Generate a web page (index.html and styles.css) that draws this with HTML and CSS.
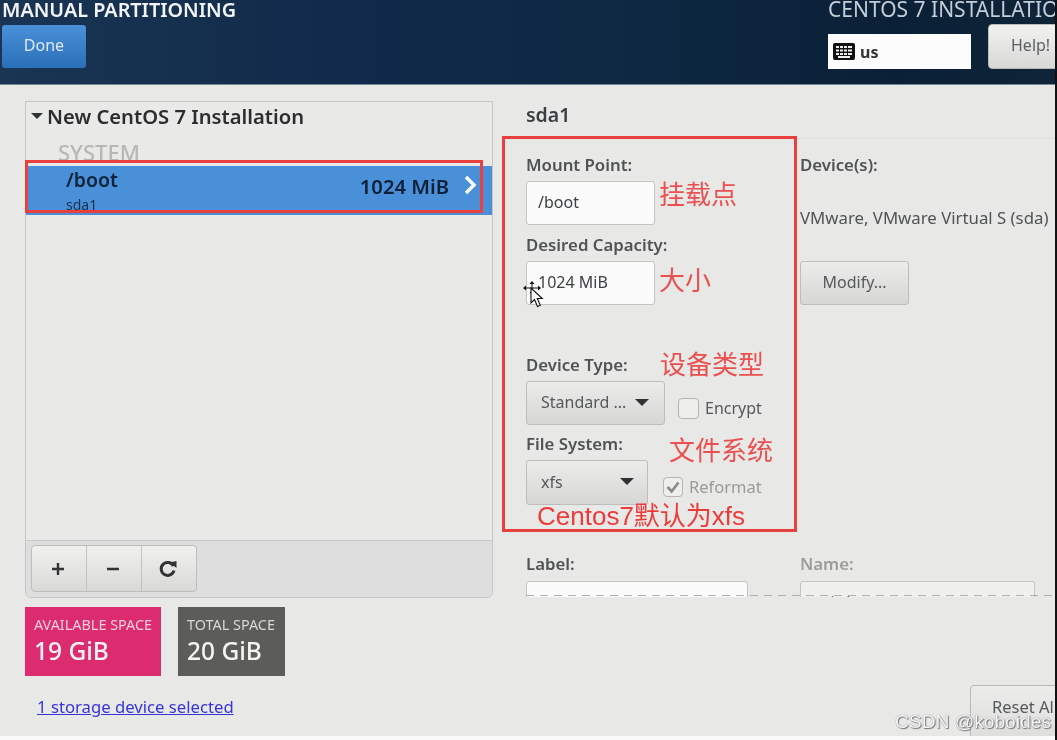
FILE: index.html
```html
<!DOCTYPE html>
<html lang="en">
<head>
<meta charset="utf-8">
<title>Manual Partitioning</title>
<link rel="stylesheet" href="styles.css">
</head>
<body>
<div class="page">
  <div class="screen">
    <header class="topbar">
      <div class="top-left">
        <h1 class="top-title">MANUAL PARTITIONING</h1>
        <button class="done">Done</button>
      </div>
      <div class="top-right">
        <div class="product">CENTOS 7 INSTALLATION</div>
        <div class="top-controls">
          <div class="kbd">
            <svg class="kbd-icon" width="22" height="17" viewBox="0 0 22 17"><rect width="22" height="17" rx="2" fill="#111"/><g fill="#eee"><rect x="3" y="3" width="3" height="2"/><rect x="7" y="3" width="3" height="2"/><rect x="11" y="3" width="3" height="2"/><rect x="15" y="3" width="4" height="2"/><rect x="3" y="6.5" width="3" height="2"/><rect x="7" y="6.5" width="3" height="2"/><rect x="11" y="6.5" width="3" height="2"/><rect x="15" y="6.5" width="4" height="2"/><rect x="3" y="10" width="3" height="2"/><rect x="7" y="10" width="3" height="2"/><rect x="11" y="10" width="3" height="2"/><rect x="15" y="10" width="4" height="2"/><rect x="5" y="13" width="12" height="2"/></g></svg>
            <span>us</span>
          </div>
          <button class="help">Help!</button>
        </div>
      </div>
    </header>

    <main class="content">
      <section class="left">
        <div class="panel">
          <div class="tree">
            <div class="install"><span class="caret"></span>New CentOS 7 Installation</div>
            <div class="system">SYSTEM</div>
            <div class="mount">
              <div class="mount-name">
                <div class="mount-path">/boot</div>
                <div class="mount-dev">sda1</div>
              </div>
              <div class="mount-size">1024 MiB</div>
              <svg class="chev" width="14" height="20" viewBox="0 0 14 20"><path d="M3 2l8 8-8 8" fill="none" stroke="#fff" stroke-width="3.4"/></svg>
            </div>
          </div>
          <div class="toolbar">
            <div class="btn-group">
              <button class="tool"><svg width="16" height="16" viewBox="0 0 16 16"><path d="M8 2v12M2 8h12" stroke="#333" stroke-width="2.400"/></svg></button>
              <button class="tool"><svg width="16" height="16" viewBox="0 0 16 16"><path d="M2 8h12" stroke="#333" stroke-width="2.400"/></svg></button>
              <button class="tool"><svg width="20" height="20" viewBox="0 0 20 20"><path d="M15.500 7a6.500 6.500 0 1 0 .5 4.500" fill="none" stroke="#333" stroke-width="3"/><path d="M11.500 3.500l7-1.500v7z" fill="#333"/></svg></button>
            </div>
          </div>
        </div>
        <div class="tiles">
          <div class="tile avail"><div class="tile-label">AVAILABLE SPACE</div><div class="tile-value">19 GiB</div></div>
          <div class="tile total"><div class="tile-label">TOTAL SPACE</div><div class="tile-value">20 GiB</div></div>
        </div>
        <a class="storage" href="#">1 storage device selected</a>
      </section>

      <section class="right">
        <div class="part-title">sda1</div>
        <div class="details">
          <div class="col-form">
            <div class="lbl">Mount Point:</div>
            <div class="input">/boot</div>
            <div class="lbl lbl-next">Desired Capacity:</div>
            <div class="input">1024 MiB</div>
            <div class="lbl lbl-type">Device Type:</div>
            <div class="row">
              <div class="select sel-type"><span>Standard ...</span><i class="arrow"></i></div>
              <label class="check check-enc"><span class="box"></span>Encrypt</label>
            </div>
            <div class="lbl lbl-fs">File System:</div>
            <div class="row">
              <div class="select sel-fs"><span>xfs</span><i class="arrow"></i></div>
              <label class="check check-ref"><span class="box"><svg width="20" height="20" viewBox="0 0 20 20"><path d="M4 10l4.500 5L16 5" fill="none" stroke="#8a8a88" stroke-width="3"/></svg></span>Reformat</label>
            </div>
            <div class="lbl lbl-label">Label:</div>
            <div class="input input-wide"></div>
          </div>
          <div class="col-dev">
            <div class="lbl">Device(s):</div>
            <div class="dev-name">VMware, VMware Virtual S (sda)</div>
            <button class="modify">Modify...</button>
            <div class="lbl lbl-name">Name:</div>
            <div class="input input-name">sda1</div>
          </div>
        </div>
        <button class="reset">Reset All</button>
      </section>
    </main>

    <div class="red-box red-row"></div>
    <div class="red-box red-form"></div>
    <div class="note note-mount">挂载点</div>
    <div class="note note-size">大小</div>
    <div class="note note-type">设备类型</div>
    <div class="note note-fs">文件系统</div>
    <div class="note note-def">Centos7默认为xfs</div>
    <svg class="cursor" width="26" height="30" viewBox="0 0 26 30"><path d="M11 1l-2.500 3h5zM11 15l-2.500-3h5zM2 8l3-2.500v5zM20 8l-3-2.500v5z" fill="#111"/><path d="M11 4v8M5 8h12" stroke="#111"/><path d="M10 8l0 15 3.500-3.500 3 7 2.800-1.200-3-6.800 5 0z" fill="#fff" stroke="#111" stroke-width="1.100"/></svg>
    <div class="watermark">CSDN @koboides</div>
  </div>
  <div class="edge"></div>
</div>
</body>
</html>
```

FILE: styles.css
```css
* { box-sizing: border-box; }
html, body { margin: 0; height: 100%; background: #fbfbfb; overflow: hidden; }
body { font-family: "Noto Sans", "Noto Sans CJK SC", sans-serif; color: #2e3436; }
button { font-family: inherit; padding: 0; cursor: default; }

.page { display: flex; width: 1057px; height: 740px; }
.edge { width: 2px; background: #111; }
.screen { position: relative; width: 1055px; height: 736px; overflow: hidden; background: #e8e8e7; filter: blur(0.5px); }

.topbar {
  height: 85px; display: flex; justify-content: space-between;
  background: linear-gradient(90deg, #193553 0%, #11294a 35%, #0e2843 60%, #0a2036 85%, #0f2438 100%);
  border-bottom: 1px solid #7b8794;
}
.top-left { padding-left: 2px; }
.top-title { margin: 0; font-size: 19.800px; line-height: 19px; font-weight: 600; color: #f2f4f6; white-space: nowrap; }
.done {
  display: block; margin-top: 6px; width: 84px; height: 43px; border: 0; border-radius: 3px; padding-bottom: 4px;
  background: linear-gradient(#4a90d9, #2a6fb8); color: #dfe9f4; font-size: 16px;
}
.top-right { width: 227px; overflow: hidden; flex: none; }
.product { font-size: 21px; line-height: 19px; color: #c4ced8; white-space: nowrap; }
.top-controls { display: flex; align-items: flex-start; margin-left: -1px; }
.kbd {
  margin-top: 15px; width: 144px; height: 35px; background: #fcfcfc; display: flex; align-items: center; flex: none;
  gap: 5px; padding-left: 6px; font-size: 16px; font-weight: 700; color: #333;
}
.kbd-icon { flex: none; }
.help {
  margin: 5px 0 0 17px; width: 80px; height: 45px; flex: none; text-align: left; padding: 0 0 4px 22px;
  border: 1px solid #bbb; border-radius: 4px; background: linear-gradient(#f2f2f1, #d8d8d6);
  color: #5a5f62; font-size: 16px;
}

.content { display: flex; gap: 33px; padding: 16px 0 0 25px; height: 651px; }

.left { width: 468px; flex: none; display: flex; flex-direction: column; align-items: flex-start; }
.panel {
  width: 468px; height: 497px; display: flex; flex-direction: column;
  border: 1px solid #c6c6c4; border-radius: 0 0 6px 6px; overflow: hidden;
}
.tree { flex: 1; background: #e9e9e8; }
.install { display: flex; align-items: center; height: 28px; font-size: 20.200px; font-weight: 600; color: #2b2d2e; padding-left: 21px; white-space: nowrap; }
.caret { position: relative; left: -16px; width: 0; margin-right: -12px; border: 6px solid transparent; border-top: 6px solid #2e3436; border-bottom: 0; }
.system { margin: 8px 0 0 32px; height: 28px; line-height: 28px; font-size: 22px; font-weight: 500; color: #b7b7b5; }
.mount { height: 49px; background: #4a90d9; display: flex; align-items: flex-start; padding: 0 15px 0 40px; overflow: hidden; }
.mount-name { flex: 1; }
.mount-path { font-size: 19.500px; line-height: 26px; margin-top: 1px; font-weight: 600; color: #10233a; }
.mount-dev { font-size: 14px; line-height: 18px; margin-top: 3px; color: #17324f; }
.mount-size { font-size: 20.200px; line-height: 26px; margin-top: 7px; font-weight: 600; color: #0f2138; }
.chev { margin: 9px 0 0 14px; flex: none; }
.toolbar { height: 57px; background: #dedede; border-top: 1px solid #c8c8c6; padding: 4px 0 0 5px; }
.btn-group { display: flex; width: 166px; height: 47px; border: 1px solid #bdbdbb; border-radius: 4px; background: linear-gradient(#f0f0ef, #d9d9d7); overflow: hidden; }
.tool { flex: 1; border: 0; border-right: 1px solid #c2c2c0; background: none; display: flex; align-items: center; justify-content: center; padding-right: 2px; }
.tool:last-child { border-right: 0; }

.tiles { display: flex; gap: 17px; margin-top: 9px; }
.tile { height: 69px; padding: 9px 9px 0; color: #f4f4f4; }
.avail { width: 136px; background: #dc2b6f; }
.total { width: 107px; background: #5c5c58; }
.tile-label { font-size: 14.400px; line-height: 18px; white-space: nowrap; color: #f0d0dc; }
.total .tile-label { color: #d8d8d4; }
.tile-value { font-size: 24.500px; line-height: 30px; margin-top: 2px; font-weight: 500; }
.storage { margin: 21px 0 0 12px; font-size: 16.700px; line-height: 20px; color: #3535d8; text-decoration: underline; }

.right { flex: 1; min-width: 0; display: flex; flex-direction: column; }
.part-title { height: 37px; line-height: 28px; font-size: 19.500px; font-weight: 600; color: #3b3f41; flex: none; }
.details {
  display: flex; height: 459px; flex: none; padding-top: 16px; overflow: hidden; position: relative;
  border-top: 1px solid #e1e1e0;
}
.details::after {
  content: ""; position: absolute; left: 0; right: 0; bottom: 1px; height: 1px;
  background: repeating-linear-gradient(90deg, #b0b0ae 0 8px, transparent 8px 14px);
}
.col-form { width: 274px; flex: none; }
.col-dev { flex: 1; }
.lbl { font-size: 16.800px; line-height: 20px; font-weight: 600; color: #4f5355; white-space: nowrap; }
.input {
  width: 129px; height: 44px; margin-top: 6px; background: #fbfbfb; border: 1px solid #c4c4c2; border-radius: 3px;
  padding-left: 11px; line-height: 40px; font-size: 16px; color: #3c4043;
}
.lbl-next { margin-top: 10px; }
.lbl-type { margin-top: 50px; }
.lbl-fs { margin-top: 9px; }
.lbl-label { margin-top: 49px; }
.input-wide { width: 222px; margin-top: 7px; }
.row { display: flex; margin-top: 6px; }
.select {
  height: 44px; display: flex; align-items: center; justify-content: space-between; padding: 0 15px 2px 14px; flex: none;
  border: 1px solid #bdbdbb; border-radius: 3px; background: linear-gradient(#ececeb, #d6d6d4); font-size: 16px; color: #55595b; white-space: nowrap;
}
.sel-type { width: 139px; }
.sel-fs { width: 122px; height: 45px; padding-right: 13px; }
.arrow { border: 7px solid transparent; border-top: 7px solid #2e3436; border-bottom: 0; }
.check { display: flex; align-items: center; gap: 6px; font-size: 16px; color: #55595b; }
.check-enc { margin: 16px 0 0 13px; height: 22px; }
.check-ref { margin: 16px 0 0 15px; height: 21px; color: #9a9a98; font-size: 16.500px; }
.box { width: 21px; height: 21px; border: 1px solid #b5b5b3; border-radius: 4px; background: #eeeeed; display: flex; align-items: center; justify-content: center; flex: none; }
.check-ref .box { width: 20px; height: 20px; }
.dev-name { margin-top: 33px; font-size: 16.800px; line-height: 20px; color: #4f5355; white-space: nowrap; }
.modify { display: block; margin-top: 33px; width: 109px; height: 44px; border: 1px solid #bdbdbb; border-radius: 3px; padding-bottom: 2px; background: linear-gradient(#ececeb, #d6d6d4); color: #55595b; font-size: 16px; }
.lbl-name { margin-top: 249px; color: #9c9c9a; }
.input-name { width: 235px; margin-top: 7px; background: #f0f0ef; color: #777; padding-left: 16px; }

.reset {
  align-self: flex-end; margin: 88px -16px 0 0; width: 101px; height: 60px; flex: none; text-align: left; padding: 0 0 18px 21px;
  border: 1px solid #bbb; border-radius: 4px; background: linear-gradient(#ececeb, #dcdcda); color: #55595b; font-size: 16.500px; white-space: nowrap; overflow: hidden;
}

.red-box { position: absolute; border: 3px solid #e8403f; }
.red-row { left: 25px; top: 160px; width: 458px; height: 53px; }
.red-form { left: 502px; top: 136px; width: 295px; height: 396px; }
.note { position: absolute; font-size: 26px; line-height: 32px; color: #e9504f; white-space: nowrap; font-family: "Noto Sans CJK SC", sans-serif; font-weight: 400; }
.note-mount { left: 659px; top: 177px; }
.note-size { left: 659px; top: 263px; }
.note-type { left: 660px; top: 347px; }
.note-fs { left: 669px; top: 433px; }
.note-def { left: 537px; top: 500px; color: #ee3a38; font-family: "Liberation Sans", "Noto Sans CJK SC", sans-serif; }
.cursor { position: absolute; left: 521px; top: 280px; }
.watermark {
  position: absolute; left: 895px; top: 711px; font-family: "Liberation Sans", sans-serif; font-size: 19.200px; line-height: 22px;
  color: #f6f6f6; text-shadow: 0 0 1px #666, 1px 1px 1px #777; white-space: nowrap;
}
```
